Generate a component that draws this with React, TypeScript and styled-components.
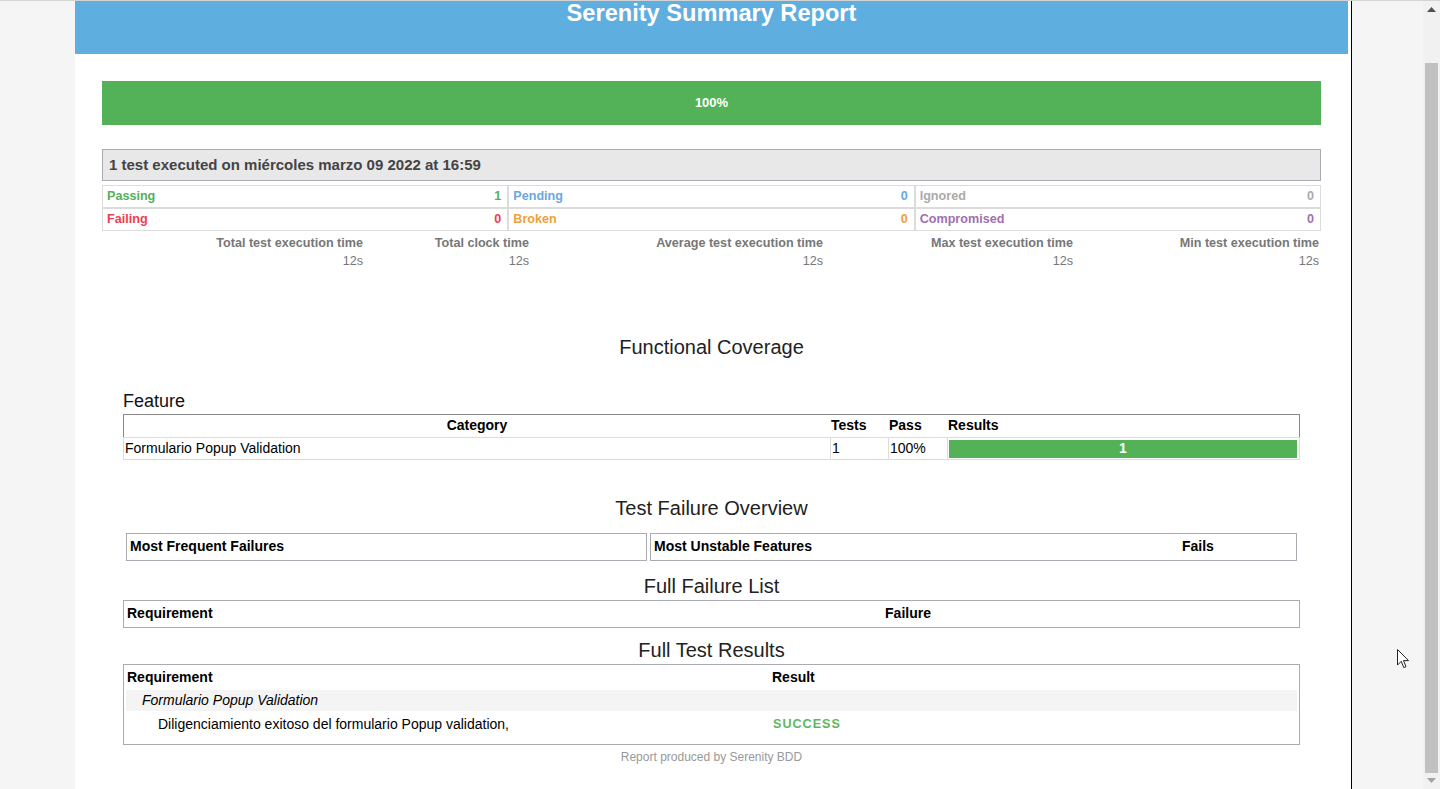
import React from 'react';
import styled, { createGlobalStyle } from 'styled-components';

const Global = createGlobalStyle`
  html, body { margin: 0; padding: 0; overflow: hidden; }
  body {
    font-family: "Liberation Sans", Arial, Helvetica, sans-serif;
    font-size: 14px;
    color: #000;
    background: #f5f5f5;
  }
`;

const Screen = styled.div`
  position: relative;
  width: 1440px;
  height: 789px;
  box-sizing: border-box;
  border-top: 1px solid #d4d4d4;
  display: flex;
  overflow: hidden;
  background: #f5f5f5;
`;

const Viewport = styled.div`
  flex: 1;
  min-width: 0;
  padding-left: 75px;
`;

const Sheet = styled.div`
  width: 1277px;
  height: 100%;
  box-sizing: border-box;
  background: #fff;
  border-right: 1px solid #000;
`;

const Banner = styled.header`
  width: 1273px;
  height: 53px;
  background: #5faee0;
`;

const BannerTitle = styled.h1`
  margin: 0;
  color: #fff;
  text-align: center;
  font-size: 23.6px;
  line-height: 24px;
  font-weight: bold;
`;

const Body = styled.main`
  padding: 27px 30px 0 27px;
`;

const ProgressBar = styled.div`
  height: 44px;
  box-sizing: border-box;
  padding-bottom: 2px;
  background: #53b257;
  color: #fff;
  font-weight: bold;
  font-size: 13px;
  display: flex;
  align-items: center;
  justify-content: center;
`;

const ExecHeader = styled.div`
  margin-top: 24px;
  height: 32px;
  box-sizing: border-box;
  border: 1px solid #aaaab2;
  background: #e8e8e8;
  color: #444;
  font-weight: bold;
  font-size: 15px;
  padding: 0 0 2px 6px;
  display: flex;
  align-items: center;
`;

const StatsGrid = styled.div`
  margin-top: 4px;
  display: grid;
  grid-template-columns: 1fr 1fr 1fr;
`;

const StatCell = styled.div<{ $color: string }>`
  height: 23px;
  box-sizing: border-box;
  border: 1px solid #dcdcdc;
  display: flex;
  align-items: center;
  justify-content: space-between;
  padding: 0 6px 2px 4px;
  font-weight: bold;
  font-size: 12.6px;
  color: ${(p) => p.$color};
`;

const TimesGrid = styled.div`
  margin-top: 3px;
  display: grid;
  grid-template-columns: 263px 166px 294px 250px 246px;
`;

const TimeCell = styled.div<{ $bold?: boolean }>`
  text-align: right;
  padding-right: 2px;
  line-height: 18px;
  font-size: 12.6px;
  color: #777;
  font-weight: ${(p) => (p.$bold ? 'bold' : 'normal')};
`;

const SectionTitle = styled.h2<{ $mt: number }>`
  margin: ${(p) => p.$mt}px 0 0;
  text-align: center;
  font-weight: normal;
  font-size: 20px;
  line-height: 24px;
  color: #222;
`;

const FeatureLabel = styled.h3`
  margin: 31px 0 0 21px;
  font-weight: normal;
  font-size: 18px;
  line-height: 22px;
  color: #111;
`;

const Inset = styled.div<{ $mt: number }>`
  margin: ${(p) => p.$mt}px 21px 0;
`;

const FeatureHead = styled.div`
  display: grid;
  grid-template-columns: 706px 58px 59px 1fr;
  height: 23px;
  box-sizing: border-box;
  border: 1px solid #888;
  border-bottom: none;
  padding-bottom: 2px;
  font-weight: bold;
  font-size: 14px;
`;

const HeadCell = styled.div<{ $center?: boolean }>`
  display: flex;
  align-items: center;
  justify-content: ${(p) => (p.$center ? 'center' : 'flex-start')};
  padding-left: ${(p) => (p.$center ? 0 : 1)}px;
`;

const FeatureRow = styled.div`
  display: grid;
  grid-template-columns: 706px 58px 59px 1fr;
  height: 23px;
  box-sizing: border-box;
  border: 1px solid #dcdcdc;
  font-size: 14px;
`;

const DataCell = styled.div<{ $first?: boolean }>`
  display: flex;
  align-items: center;
  padding: 0 0 2px 1px;
  border-left: ${(p) => (p.$first ? 'none' : '1px solid #dcdcdc')};
`;

const BarCell = styled.div`
  border-left: 1px solid #dcdcdc;
  padding: 2px 2px 2px 1px;
  display: flex;
`;

const ResultBar = styled.div`
  flex: 1;
  background: #53b257;
  color: #fff;
  font-weight: bold;
  font-size: 14px;
  display: flex;
  align-items: center;
  justify-content: center;
  padding-bottom: 2px;
`;

const OverviewRow = styled.div`
  margin: 13px 24px 0 24px;
  display: flex;
  gap: 3px;
`;

const OverviewBox = styled.div<{ $w?: number }>`
  ${(p) => (p.$w ? `width: ${p.$w}px;` : 'flex: 1;')}
  height: 28px;
  box-sizing: border-box;
  border: 1px solid #aaaab2;
  padding: 0 0 2px 3px;
  display: grid;
  grid-template-columns: 1fr 114px;
  align-items: center;
  font-weight: bold;
  font-size: 14px;
`;

const FailureBox = styled.div`
  height: 28px;
  box-sizing: border-box;
  border: 1px solid #aaaab2;
  padding-bottom: 2px;
  display: grid;
  grid-template-columns: 393px 1fr;
  align-items: center;
  font-weight: bold;
  font-size: 14px;
`;

const FailureReq = styled.div`
  padding-left: 3px;
`;

const FailureCol = styled.div`
  text-align: center;
`;

const ResultsBox = styled.div`
  box-sizing: border-box;
  border: 1px solid #aaaab2;
  padding: 2px 2px 10px;
  display: flex;
  flex-direction: column;
  gap: 2px;
`;

const ResultsRow = styled.div<{ $shade?: boolean; $bold?: boolean; $lift?: boolean }>`
  height: 21px;
  box-sizing: border-box;
  padding-bottom: ${(p) => (p.$lift ? 2 : 0)}px;
  display: grid;
  grid-template-columns: 645px 1fr;
  align-items: center;
  font-size: 14px;
  background: ${(p) => (p.$shade ? '#f4f4f4' : 'transparent')};
  font-weight: ${(p) => (p.$bold ? 'bold' : 'normal')};
`;

const RCell = styled.div<{ $indent?: number; $italic?: boolean }>`
  padding-left: ${(p) => p.$indent ?? 1}px;
  font-style: ${(p) => (p.$italic ? 'italic' : 'normal')};
  white-space: nowrap;
`;

const Success = styled.div`
  padding: 1px 0 0 2px;
  color: #5cb85c;
  font-weight: bold;
  font-size: 12.6px;
  letter-spacing: 1px;
`;

const Footer = styled.div`
  margin-top: 4px;
  text-align: center;
  font-size: 12px;
  line-height: 16px;
  color: #999;
`;

const Scrollbar = styled.div`
  width: 17px;
  background: #f1f1f1;
  display: flex;
  flex-direction: column;
`;

const ScrollBtn = styled.div`
  height: 17px;
  display: flex;
  align-items: center;
  justify-content: center;
`;

const Track = styled.div`
  flex: 1;
  padding: 45px 2px 0;
`;

const Thumb = styled.div`
  height: 710px;
  background: #c1c1c1;
`;

const Cursor = styled.svg`
  position: absolute;
  left: 1397px;
  top: 648px;
`;

const stats = [
  { label: 'Passing', value: '1', color: '#55b05a' },
  { label: 'Pending', value: '0', color: '#6aa8dc' },
  { label: 'Ignored', value: '0', color: '#aaaaaa' },
  { label: 'Failing', value: '0', color: '#f03c4e' },
  { label: 'Broken', value: '0', color: '#f0a03a' },
  { label: 'Compromised', value: '0', color: '#a070b0' },
];

const times = [
  'Total test execution time',
  'Total clock time',
  'Average test execution time',
  'Max test execution time',
  'Min test execution time',
];

export default function App() {
  return (
    <>
      <Global />
      <Screen>
        <Viewport>
          <Sheet>
            <Banner>
              <BannerTitle>Serenity Summary Report</BannerTitle>
            </Banner>
            <Body>
              <ProgressBar>100%</ProgressBar>
              <ExecHeader>1 test executed on miércoles marzo 09 2022 at 16:59</ExecHeader>
              <StatsGrid>
                {stats.map((s) => (
                  <StatCell key={s.label} $color={s.color}>
                    <span>{s.label}</span>
                    <span>{s.value}</span>
                  </StatCell>
                ))}
              </StatsGrid>
              <TimesGrid>
                {times.map((t) => (
                  <TimeCell key={t} $bold>
                    {t}
                  </TimeCell>
                ))}
                {times.map((t) => (
                  <TimeCell key={t + '-v'}>12s</TimeCell>
                ))}
              </TimesGrid>

              <SectionTitle $mt={65}>Functional Coverage</SectionTitle>
              <FeatureLabel>Feature</FeatureLabel>
              <Inset $mt={2}>
                <FeatureHead>
                  <HeadCell $center>Category</HeadCell>
                  <HeadCell>Tests</HeadCell>
                  <HeadCell>Pass</HeadCell>
                  <HeadCell>Results</HeadCell>
                </FeatureHead>
                <FeatureRow>
                  <DataCell $first>Formulario Popup Validation</DataCell>
                  <DataCell>1</DataCell>
                  <DataCell>100%</DataCell>
                  <BarCell>
                    <ResultBar>1</ResultBar>
                  </BarCell>
                </FeatureRow>
              </Inset>

              <SectionTitle $mt={36}>Test Failure Overview</SectionTitle>
              <OverviewRow>
                <OverviewBox $w={521}>
                  <span>Most Frequent Failures</span>
                </OverviewBox>
                <OverviewBox>
                  <span>Most Unstable Features</span>
                  <span>Fails</span>
                </OverviewBox>
              </OverviewRow>

              <SectionTitle $mt={13}>Full Failure List</SectionTitle>
              <Inset $mt={2}>
                <FailureBox>
                  <FailureReq>Requirement</FailureReq>
                  <FailureCol>Failure</FailureCol>
                </FailureBox>
              </Inset>

              <SectionTitle $mt={10}>Full Test Results</SectionTitle>
              <Inset $mt={2}>
                <ResultsBox>
                  <ResultsRow $bold $lift>
                    <RCell>Requirement</RCell>
                    <RCell>Result</RCell>
                  </ResultsRow>
                  <ResultsRow $shade $lift>
                    <RCell $indent={16} $italic>
                      Formulario Popup Validation
                    </RCell>
                  </ResultsRow>
                  <ResultsRow>
                    <RCell $indent={32}>Diligenciamiento exitoso del formulario Popup validation,</RCell>
                    <Success>SUCCESS</Success>
                  </ResultsRow>
                </ResultsBox>
              </Inset>
              <Footer>Report produced by Serenity BDD</Footer>
            </Body>
          </Sheet>
        </Viewport>
        <Scrollbar>
          <ScrollBtn>
            <svg width="9" height="5" viewBox="0 0 9 5">
              <path d="M0 5 L4.5 0 L9 5 Z" fill="#505050" />
            </svg>
          </ScrollBtn>
          <Track>
            <Thumb />
          </Track>
          <ScrollBtn>
            <svg width="9" height="5" viewBox="0 0 9 5">
              <path d="M0 0 L4.5 5 L9 0 Z" fill="#a3a3a3" />
            </svg>
          </ScrollBtn>
        </Scrollbar>
        <Cursor width="13" height="20" viewBox="0 0 13 20">
          <path
            d="M0.5 0.5 L0.5 16 L4.2 12.3 L6.8 18.6 L9 17.7 L6.5 11.6 L11.5 11.6 Z"
            fill="#fff"
            stroke="#222"
            strokeWidth="1"
            strokeLinejoin="miter"
          />
        </Cursor>
      </Screen>
    </>
  );
}
